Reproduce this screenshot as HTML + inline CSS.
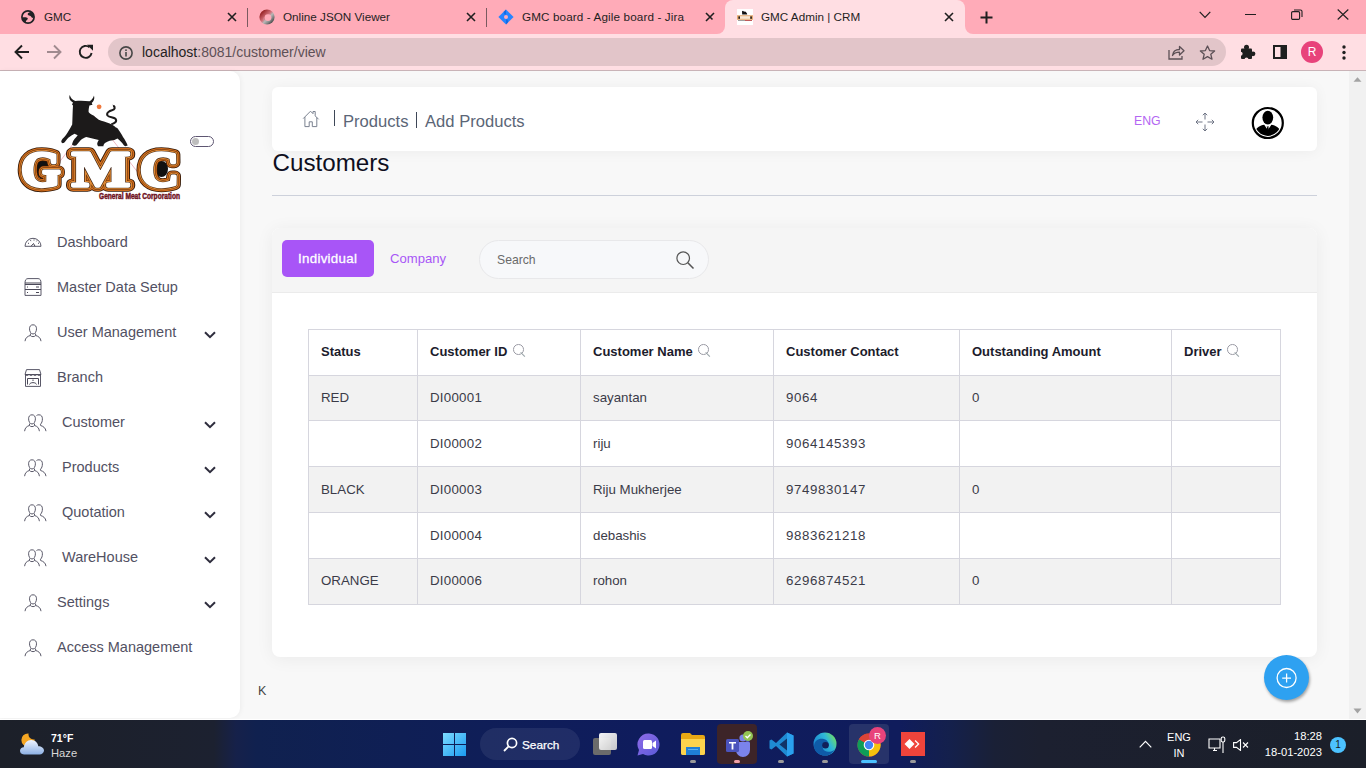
<!DOCTYPE html>
<html><head><meta charset="utf-8">
<style>
*{margin:0;padding:0;box-sizing:border-box}
html,body{width:1366px;height:768px;overflow:hidden;font-family:"Liberation Sans",sans-serif;background:#f8f8f8;position:relative}
.abs{position:absolute}
svg{display:block}
#tabbar{left:0;top:0;width:1366px;height:34px;background:#ffabb8}
#toolbar{left:0;top:34px;width:1366px;height:36px;background:#ffdee3}
#tline{left:0;top:70px;width:1366px;height:1px;background:#c9b3b7}
.tabt{top:10px;font-size:11.7px;color:#1f1f1f;white-space:nowrap}
.tsep{top:8px;width:1px;height:19px;background:#7a5a60}
#omni{left:108px;top:38px;width:1118px;height:28px;border-radius:14px;background:#e2c5c9}
#page{left:0;top:71px;width:1350px;height:649px;background:#f8f8f8}
#side{left:0;top:71px;width:240px;height:647px;background:#fff;border-radius:0 10px 10px 0;box-shadow:1px 0 5px rgba(0,0,0,.05)}
.mi{position:absolute;left:0;width:240px;height:20px;font-size:14.5px;color:#525163}
.mi span{position:absolute;top:1px;white-space:nowrap}
.mi svg.ic{position:absolute;left:24px}
.chev{position:absolute;left:204px;top:8.3px}
.bc{top:111.5px;font-size:16.6px;color:#5b6677;white-space:nowrap}
#scroll{left:1349px;top:71px;width:17px;height:649px;background:#f1f1f1}
#taskbar{left:0;top:720px;width:1366px;height:48px;background:linear-gradient(90deg,#1c2029 0px,#1c2130 214px,#16214a 236px,#10214f 256px,#0f1f55 400px,#0f1c5d 640px,#101c5c 900px,#14204c 950px,#1a2036 995px,#1c2030 1040px,#1b1f29 1366px)}
#tbl{border-collapse:collapse;table-layout:fixed;width:972px}
#tbl th,#tbl td{border:1px solid #d6d6de;height:45.8px;padding:0 0 .5px 12px;text-align:left;vertical-align:middle;white-space:nowrap}
#tbl th{font-size:13px;font-weight:bold;color:#1c1c2c;background:#fff;padding-bottom:1px}
#tbl td{font-size:13.3px;color:#3b3b48;background:#fff}
#tbl tr.od td{background:#f2f2f2}
#tbl td.n{letter-spacing:.6px}
#tbl td.d{letter-spacing:.25px}
.si{display:inline-block;width:14px;height:10px;vertical-align:0;position:relative}
.si:before{content:"";position:absolute;left:2px;top:-2.2px;width:8.8px;height:8.8px;border:1.1px solid #9a9aa4;border-radius:50%}
.si:after{content:"";position:absolute;left:9.6px;top:5.6px;width:6px;height:1.4px;background:#9aa4a8;transform:rotate(45deg);transform-origin:0 0}
</style></head>
<body>
<!-- ===== CHROME TAB BAR ===== -->
<div id="tabbar" class="abs"></div>
<!-- tab1 -->
<svg class="abs" style="left:21px;top:10px" width="14" height="14" viewBox="0 0 14 14"><circle cx="7" cy="7" r="6.1" stroke="#202124" stroke-width="1.7" fill="none"/><path d="M6.6 4.2C7 2.6 9.2 1.4 11.2 2.2L13 5.5L12.6 7.8C11.6 8.2 10.4 7.6 10 6.6C9.6 5.6 8.2 5.6 7.4 5.3Z" fill="#202124"/><path d="M1 7.6C3 7 5.6 7 6.6 7.9C7.2 8.8 6.3 9.8 5.3 10.4C4.6 11.2 4.8 12.2 5.4 13L2.4 11.6Z" fill="#202124"/></svg>
<div class="abs tabt" style="left:44px">GMC</div>
<svg class="abs tx" style="left:227px;top:12px" width="10" height="10" viewBox="0 0 10 10"><path d="M1 1L9 9M9 1L1 9" stroke="#1f1f1f" stroke-width="1.6"/></svg>
<div class="abs tsep" style="left:247px"></div>
<!-- tab2 -->
<svg class="abs" style="left:259px;top:9px" width="16" height="16" viewBox="0 0 16 16"><defs><linearGradient id="jg" x1="0.1" y1="0.1" x2="0.9" y2="0.9"><stop offset="0" stop-color="#8a1010"/><stop offset=".45" stop-color="#d2707a"/><stop offset=".6" stop-color="#b8b8b8"/><stop offset="1" stop-color="#3a3a3a"/></linearGradient><linearGradient id="jg2" x1="0" y1="0" x2="1" y2="1"><stop offset="0" stop-color="#f4f4f4"/><stop offset="1" stop-color="#7a7a7a"/></linearGradient></defs><circle cx="8" cy="8" r="7.6" fill="url(#jg)"/><path d="M4.2 9.5A4.6 4.6 0 0 0 12.6 10.5A4 4 0 0 1 4.6 8Z" fill="url(#jg2)" opacity=".9"/><circle cx="9" cy="8.6" r="3.4" fill="#ffabb8"/></svg>
<div class="abs tabt" style="left:283px">Online JSON Viewer</div>
<svg class="abs tx" style="left:466px;top:12px" width="10" height="10" viewBox="0 0 10 10"><path d="M1 1L9 9M9 1L1 9" stroke="#1f1f1f" stroke-width="1.6"/></svg>
<div class="abs tsep" style="left:486px"></div>
<!-- tab3 -->
<svg class="abs" style="left:498px;top:9px" width="16" height="16" viewBox="0 0 16 16"><path d="M8 0.4L15.6 8L8 15.6L0.4 8Z" fill="#2684ff"/><path d="M8 0.4L6.2 2.2Q5 4 7 6L8 5Z" fill="#0b5ed7" opacity=".7"/><path d="M8 15.6L9.8 13.8Q11 12 9 10L8 11Z" fill="#0b5ed7" opacity=".7"/><circle cx="8" cy="8" r="2" fill="#ffabb8"/></svg>
<div class="abs tabt" style="left:522px;letter-spacing:.12px">GMC board - Agile board - Jira</div>
<svg class="abs tx" style="left:705px;top:12px" width="10" height="10" viewBox="0 0 10 10"><path d="M1 1L9 9M9 1L1 9" stroke="#1f1f1f" stroke-width="1.6"/></svg>
<!-- active tab -->
<div class="abs" style="left:717px;top:26px;width:256px;height:8px;background:#ffdee3"></div>
<div class="abs" style="left:709px;top:18px;width:16px;height:16px;border-radius:8px;background:#ffabb8"></div>
<div class="abs" style="left:965px;top:18px;width:16px;height:16px;border-radius:8px;background:#ffabb8"></div>
<div class="abs" style="left:725px;top:0;width:240px;height:34px;background:#ffdee3;border-radius:8px 8px 0 0"></div>
<div class="abs" style="left:737px;top:9px;width:16px;height:16px;background:#fff"></div>
<svg class="abs" style="left:737px;top:9px" width="16" height="16" viewBox="0 0 16 16"><path d="M5 2.2L6 1.8L6.8 2.4L8.8 2.8L10 4.4L10.2 5.6L5.2 5.6Z" fill="#111"/><rect x="0" y="6.2" width="16" height="4.6" fill="#e6aa70"/><path d="M3 7.2H13V9.8H3Z" fill="#f8e6d4"/><rect x="1.4" y="7.4" width="1.6" height="2.4" fill="#222"/><rect x="13.3" y="7.4" width="1.6" height="2.4" fill="#222"/><rect x="1" y="11.2" width="7" height=".7" fill="#777"/><rect x="8" y="11.2" width="7" height=".8" fill="#b03030"/></svg>
<div class="abs tabt" style="left:761px">GMC Admin | CRM</div>
<svg class="abs tx" style="left:944px;top:12px" width="10" height="10" viewBox="0 0 10 10"><path d="M1 1L9 9M9 1L1 9" stroke="#1f1f1f" stroke-width="1.6"/></svg>
<!-- new tab -->
<svg class="abs" style="left:980px;top:11px" width="13" height="13" viewBox="0 0 13 13"><path d="M6.5 0.5V12.5M0.5 6.5H12.5" stroke="#1f1f1f" stroke-width="2"/></svg>
<!-- window controls -->
<svg class="abs" style="left:1199px;top:11px" width="12" height="8" viewBox="0 0 12 8"><path d="M0.7 0.9L6 6.5L11.3 0.9" stroke="#1f1f1f" stroke-width="1.2" fill="none"/></svg>
<div class="abs" style="left:1245px;top:14px;width:11px;height:1px;background:#1f1f1f"></div>
<svg class="abs" style="left:1291px;top:9px" width="12" height="11" viewBox="0 0 12 11"><rect x="0.6" y="2.6" width="8" height="7.8" rx="1.2" stroke="#1f1f1f" stroke-width="1.1" fill="none"/><path d="M3 1H9.5Q11 1 11 2.5V8" stroke="#1f1f1f" stroke-width="1.1" fill="none"/></svg>
<svg class="abs" style="left:1337px;top:9px" width="12" height="11" viewBox="0 0 12 11"><path d="M0.7 0.5L11.3 10.5M11.3 0.5L0.7 10.5" stroke="#1f1f1f" stroke-width="1.1"/></svg>

<!-- ===== TOOLBAR ===== -->
<div id="toolbar" class="abs"></div>
<div id="tline" class="abs"></div>
<svg class="abs" style="left:14px;top:44px" width="16" height="16" viewBox="0 0 16 16"><path d="M15 8H2M8 1.5L1.5 8L8 14.5" stroke="#1f1f1f" stroke-width="1.9" fill="none"/></svg>
<svg class="abs" style="left:46px;top:44px" width="16" height="16" viewBox="0 0 16 16"><path d="M1 8H14M8 1.5L14.5 8L8 14.5" stroke="#a08a8f" stroke-width="1.9" fill="none"/></svg>
<svg class="abs" style="left:78px;top:44px" width="16" height="16" viewBox="0 0 16 16"><path d="M13.6 9A6 6 0 1 1 11.5 3.2" stroke="#1f1f1f" stroke-width="1.9" fill="none"/><path d="M9 0.8H15V6.8Z" fill="#1f1f1f"/></svg>
<div id="omni" class="abs"></div>
<svg class="abs" style="left:119px;top:46px" width="14" height="14" viewBox="0 0 14 14"><circle cx="7" cy="7" r="6.1" stroke="#474747" stroke-width="1.6" fill="none"/><rect x="6.2" y="6" width="1.6" height="4.5" fill="#474747"/><rect x="6.2" y="3.4" width="1.6" height="1.6" fill="#474747"/></svg>
<div class="abs" style="left:142px;top:44px;font-size:14px;color:#1f1f1f;white-space:nowrap">localhost<span style="color:#5e5056">:8081/customer/view</span></div>
<svg class="abs" style="left:1168px;top:44px" width="17" height="16" viewBox="0 0 17 16"><path d="M1 6V15H14V12" stroke="#5c5056" stroke-width="1.3" fill="none"/><path d="M4.5 11.5C5 7 8 5.5 11.5 5.5V2.5L16 6.8L11.5 11V8.2C8.5 8.2 6 9 4.5 11.5Z" stroke="#5c5056" stroke-width="1.3" fill="none" stroke-linejoin="round"/></svg>
<svg class="abs" style="left:1199px;top:45px" width="17" height="15" viewBox="0 0 17 15"><path d="M8.5 1L10.6 5.6L15.6 6L11.8 9.3L13 14.2L8.5 11.6L4 14.2L5.2 9.3L1.4 6L6.4 5.6Z" stroke="#5c5056" stroke-width="1.3" fill="none" stroke-linejoin="round"/></svg>
<svg class="abs" style="left:1240px;top:44px" width="16" height="16" viewBox="0 0 16 16"><rect x="1" y="4.6" width="11" height="10.4" rx="1" fill="#1f1f1f"/><circle cx="6.5" cy="3.2" r="2.5" fill="#1f1f1f"/><circle cx="13" cy="9.8" r="2.4" fill="#1f1f1f"/><circle cx="6.5" cy="15.4" r="2" fill="#ffdee3"/><circle cx="0.6" cy="9.8" r="2" fill="#ffdee3"/></svg>
<svg class="abs" style="left:1273px;top:45px" width="14" height="14" viewBox="0 0 14 14"><rect x="1" y="1" width="12" height="12" stroke="#1f1f1f" stroke-width="2" fill="none"/><rect x="7.5" y="1" width="5.5" height="12" fill="#1f1f1f"/></svg>
<div class="abs" style="left:1301px;top:41px;width:22px;height:22px;border-radius:11px;background:#e8437b;color:#fff;font-size:12px;text-align:center;line-height:22px">R</div>
<svg class="abs" style="left:1342px;top:45px" width="4" height="15" viewBox="0 0 4 15"><circle cx="2" cy="2" r="1.7" fill="#1f1f1f"/><circle cx="2" cy="7.5" r="1.7" fill="#1f1f1f"/><circle cx="2" cy="13" r="1.7" fill="#1f1f1f"/></svg>
<!-- ===== PAGE ===== -->
<div id="page" class="abs"></div>
<div id="side" class="abs"></div>
<!-- logo -->
<svg class="abs" style="left:14px;top:92px" width="172" height="110" viewBox="0 0 172 110">
  <path d="M26 96 L80 24 L136 96" stroke="#e89aa8" stroke-width=".7" fill="none"/>
  <path d="M55.8 3.1 C54.5 6 56 9 59 10.5 L58 12.5 L59 13.6 C58.5 20 58.6 26 58.2 32.4 L56.6 35.5 C54.5 39 53 41.5 51.2 44.1 C49.5 46 47.2 48 47.25 49.6 C47.5 51 48.5 51.5 49.6 51.1 C51 50 52.5 47.8 54.3 45.7 C56.5 44 58.5 42.8 60.5 41.75 L63.7 43.3 C61.5 46 59.5 48 59 49.6 C58.2 51.5 58 52.5 58.2 52.7 C59.5 53.8 61 53.8 62.1 53.5 C64 51.5 65.5 49.5 66.8 48 C68.5 46.5 70.5 45.5 72.25 44.9 L78.5 46.4 L84.75 48 C84 49.5 83.2 50.5 83.2 51.9 C83.5 53.5 84 54.2 84.75 54.25 L89.4 54.25 C89.5 53 90 52 91 51.1 C92.5 50 94 49.2 95.7 48.8 L100.4 48 L103.5 46.4 C105 47.5 106.5 49 108.2 51.1 C109.2 52.5 110 53.8 111.3 54.25 L113.7 53.5 C112.5 50.5 111 47.5 109 44.9 C107.5 42.5 106.5 40.5 105 38.6 C104 36.5 103 35.5 101.9 35.5 C99.5 33.5 97.5 32.5 95.7 31.6 C92 30 88 29 84.75 27.7 C82.5 26 81 25 80 23.8 C77 22 75 21 74.6 19.9 C74.5 17.5 75 15.5 75.4 13.6 L78.5 12.8 L77.7 11 C79.5 9.5 81 7 80 3.5 C79.2 6 78 8 75.5 9.3 C71 8.5 65.5 8.5 61.3 8.9 C58.5 8 56.5 6 55.8 3.1 Z" fill="#1c1a1a"/>
  <path d="M97.25 32.4 C100.5 31.5 103.5 29.5 101.5 26.8 C99.5 25 95 25.5 93.5 23.5 C92 21 95.5 18.8 98 18.2 C101 17.5 101.5 15.5 99.6 13.6" stroke="#1c1a1a" stroke-width="2" fill="none"/>
  <path d="M98.5 12.5 L101.5 14.5 L100 16 Z" fill="#1c1a1a"/>
  <circle cx="85.1" cy="14.8" r="2.4" fill="#f0783c"/>
  <defs><g id="gmcl" font-family="Liberation Serif" font-weight="bold" font-size="50">
    <text x="7" y="93.6" textLength="39.5" lengthAdjust="spacingAndGlyphs">G</text>
    <text x="58" y="93.6" textLength="58" lengthAdjust="spacingAndGlyphs">M</text>
    <text x="126" y="93.6" textLength="39" lengthAdjust="spacingAndGlyphs">C</text>
  </g></defs>
  <ellipse cx="30" cy="77" rx="7.5" ry="10.5" fill="#111"/>
  <ellipse cx="147.5" cy="77" rx="6.5" ry="8" fill="#111"/>
  <path d="M73 94L78 79L80 94ZM94 94L99 79L102 94Z" fill="#111"/>
  <use href="#gmcl" fill="none" stroke="#2e1606" stroke-width="11.4" stroke-linejoin="round"/>
  <use href="#gmcl" fill="none" stroke="#d06c1c" stroke-width="9.8" stroke-linejoin="round"/>
  <use href="#gmcl" fill="none" stroke="#5a2a0a" stroke-width="7.4" stroke-linejoin="round"/>
  <use href="#gmcl" fill="none" stroke="#e08a34" stroke-width="6.6" stroke-linejoin="round"/>
  <use href="#gmcl" fill="none" stroke="#3a1c0a" stroke-width="4.6" stroke-linejoin="round"/>
  <use href="#gmcl" fill="#fff" stroke="#fff" stroke-width="3.4" stroke-linejoin="round"/>
  <text x="85" y="106.5" font-family="Liberation Sans" font-weight="bold" font-size="8.4" fill="#6e1020" stroke="#6e1020" stroke-width=".45" textLength="81" lengthAdjust="spacingAndGlyphs">General Meat Corporation</text>
</svg>
<!-- toggle -->
<div class="abs" style="left:190px;top:136px;width:24px;height:11px;border:1.3px solid #5e5672;border-radius:6px;background:#fff"></div>
<div class="abs" style="left:192px;top:138px;width:7px;height:7px;border-radius:4px;background:#bdbdbd"></div>

<!-- menu -->
<div class="mi" style="top:233px"><svg class="ic" style="top:4px" width="18" height="10" viewBox="0 0 18 10"><path d="M1 9.3A8 8 0 0 1 17 9.3Z" stroke="#5a5969" stroke-width="1" fill="none"/><path d="M7 9.3L9.5 6.5L11 9.3M4 6l1 .6M6.5 3.2l.4.9M10 2.5v1M13 3.5l-.5.8M15 6l-1 .5" stroke="#4a4857" stroke-width="1" fill="none"/></svg><span style="left:57px">Dashboard</span></div>
<div class="mi" style="top:278px"><svg class="ic" style="top:0px" width="18" height="18" viewBox="0 0 18 18"><path d="M1 5Q1 .6 4 .6H14Q17 .6 17 5V17.4H1Z" stroke="#5a5969" stroke-width="1" fill="none"/><path d="M1 5H17M1 6.5H17M1 11.5H17M3 9H4M3 14.5H4M12 9H15M12 14.5H15" stroke="#4a4857" stroke-width="1" fill="none"/></svg><span style="left:57px">Master Data Setup</span></div>
<div class="mi" style="top:323px"><svg class="ic" style="top:1px" width="18" height="18" viewBox="0 0 18 18"><path d="M9 .8C6.5 .8 5.5 2.6 5.5 4.8C5.5 7.6 7 10 9 10C11 10 12.5 7.6 12.5 4.8C12.5 2.6 11.5 .8 9 .8Z" stroke="#5a5969" stroke-width="1" fill="none"/><path d="M6.5 9.5L6.3 11.5C3.5 12.3 1.3 13.8 1 17.2M11.5 9.5L11.7 11.5C14.5 12.3 16.7 13.8 17 17.2M6.3 11.5C7.5 13 10.5 13 11.7 11.5" stroke="#5a5969" stroke-width="1" fill="none"/></svg><span style="left:57px">User Management</span><svg class="chev" width="12" height="8" viewBox="0 0 12 8"><path d="M1 1.2L6 6.2L11 1.2" stroke="#2e2d3d" stroke-width="2" fill="none"/></svg></div>
<div class="mi" style="top:368px"><svg class="ic" style="top:1px" width="18" height="18" viewBox="0 0 18 18"><path d="M1.5 5.5V17.4H16.5V5.5M1 5.5H17L15.5 .6H2.5Z" stroke="#5a5969" stroke-width="1" fill="none"/><path d="M1 5.5Q3 7.5 5 5.5Q7 7.5 9 5.5Q11 7.5 13 5.5Q15 7.5 17 5.5M3.5 15.5V9.5H14.5V15.5M5.5 15.5C6 13 12 13 12.5 15.5M9 10.5V12" stroke="#4a4857" stroke-width="1" fill="none"/></svg><span style="left:57px">Branch</span></div>
<div class="mi" style="top:413px"><svg class="ic" style="top:1px" width="24" height="18" viewBox="0 0 24 18"><path d="M8 .8C5.6 .8 4.6 2.6 4.6 4.8C4.6 7.6 6 10 8 10C10 10 11.4 7.6 11.4 4.8C11.4 2.6 10.4 .8 8 .8Z" stroke="#5a5969" stroke-width="1" fill="none"/><path d="M5.6 9.5L5.4 11.5C2.8 12.3 .9 13.8 .6 17.2M10.4 9.5L10.6 11.5C13.2 12.3 15.1 13.8 15.4 17.2M5.4 11.5C6.6 13 9.4 13 10.6 11.5" stroke="#5a5969" stroke-width="1" fill="none"/><path d="M12.5 1.5C13.3 .9 14 .8 15 .8C17.4 .8 18.4 2.6 18.4 4.8C18.4 7.2 17.8 9 16.5 10.2L16.6 11.5C19.2 12.3 21.6 13.8 22 17.2" stroke="#5a5969" stroke-width="1" fill="none"/></svg><span style="left:62px">Customer</span><svg class="chev" width="12" height="8" viewBox="0 0 12 8"><path d="M1 1.2L6 6.2L11 1.2" stroke="#2e2d3d" stroke-width="2" fill="none"/></svg></div>
<div class="mi" style="top:458px"><svg class="ic" style="top:1px" width="24" height="18" viewBox="0 0 24 18"><path d="M8 .8C5.6 .8 4.6 2.6 4.6 4.8C4.6 7.6 6 10 8 10C10 10 11.4 7.6 11.4 4.8C11.4 2.6 10.4 .8 8 .8Z" stroke="#5a5969" stroke-width="1" fill="none"/><path d="M5.6 9.5L5.4 11.5C2.8 12.3 .9 13.8 .6 17.2M10.4 9.5L10.6 11.5C13.2 12.3 15.1 13.8 15.4 17.2M5.4 11.5C6.6 13 9.4 13 10.6 11.5" stroke="#5a5969" stroke-width="1" fill="none"/><path d="M12.5 1.5C13.3 .9 14 .8 15 .8C17.4 .8 18.4 2.6 18.4 4.8C18.4 7.2 17.8 9 16.5 10.2L16.6 11.5C19.2 12.3 21.6 13.8 22 17.2" stroke="#5a5969" stroke-width="1" fill="none"/></svg><span style="left:62px">Products</span><svg class="chev" width="12" height="8" viewBox="0 0 12 8"><path d="M1 1.2L6 6.2L11 1.2" stroke="#2e2d3d" stroke-width="2" fill="none"/></svg></div>
<div class="mi" style="top:503px"><svg class="ic" style="top:1px" width="24" height="18" viewBox="0 0 24 18"><path d="M8 .8C5.6 .8 4.6 2.6 4.6 4.8C4.6 7.6 6 10 8 10C10 10 11.4 7.6 11.4 4.8C11.4 2.6 10.4 .8 8 .8Z" stroke="#5a5969" stroke-width="1" fill="none"/><path d="M5.6 9.5L5.4 11.5C2.8 12.3 .9 13.8 .6 17.2M10.4 9.5L10.6 11.5C13.2 12.3 15.1 13.8 15.4 17.2M5.4 11.5C6.6 13 9.4 13 10.6 11.5" stroke="#5a5969" stroke-width="1" fill="none"/><path d="M12.5 1.5C13.3 .9 14 .8 15 .8C17.4 .8 18.4 2.6 18.4 4.8C18.4 7.2 17.8 9 16.5 10.2L16.6 11.5C19.2 12.3 21.6 13.8 22 17.2" stroke="#5a5969" stroke-width="1" fill="none"/></svg><span style="left:62px">Quotation</span><svg class="chev" width="12" height="8" viewBox="0 0 12 8"><path d="M1 1.2L6 6.2L11 1.2" stroke="#2e2d3d" stroke-width="2" fill="none"/></svg></div>
<div class="mi" style="top:548px"><svg class="ic" style="top:1px" width="24" height="18" viewBox="0 0 24 18"><path d="M8 .8C5.6 .8 4.6 2.6 4.6 4.8C4.6 7.6 6 10 8 10C10 10 11.4 7.6 11.4 4.8C11.4 2.6 10.4 .8 8 .8Z" stroke="#5a5969" stroke-width="1" fill="none"/><path d="M5.6 9.5L5.4 11.5C2.8 12.3 .9 13.8 .6 17.2M10.4 9.5L10.6 11.5C13.2 12.3 15.1 13.8 15.4 17.2M5.4 11.5C6.6 13 9.4 13 10.6 11.5" stroke="#5a5969" stroke-width="1" fill="none"/><path d="M12.5 1.5C13.3 .9 14 .8 15 .8C17.4 .8 18.4 2.6 18.4 4.8C18.4 7.2 17.8 9 16.5 10.2L16.6 11.5C19.2 12.3 21.6 13.8 22 17.2" stroke="#5a5969" stroke-width="1" fill="none"/></svg><span style="left:62px">WareHouse</span><svg class="chev" width="12" height="8" viewBox="0 0 12 8"><path d="M1 1.2L6 6.2L11 1.2" stroke="#2e2d3d" stroke-width="2" fill="none"/></svg></div>
<div class="mi" style="top:593px"><svg class="ic" style="top:1px" width="18" height="18" viewBox="0 0 18 18"><path d="M9 .8C6.5 .8 5.5 2.6 5.5 4.8C5.5 7.6 7 10 9 10C11 10 12.5 7.6 12.5 4.8C12.5 2.6 11.5 .8 9 .8Z" stroke="#5a5969" stroke-width="1" fill="none"/><path d="M6.5 9.5L6.3 11.5C3.5 12.3 1.3 13.8 1 17.2M11.5 9.5L11.7 11.5C14.5 12.3 16.7 13.8 17 17.2M6.3 11.5C7.5 13 10.5 13 11.7 11.5" stroke="#5a5969" stroke-width="1" fill="none"/></svg><span style="left:57px">Settings</span><svg class="chev" width="12" height="8" viewBox="0 0 12 8"><path d="M1 1.2L6 6.2L11 1.2" stroke="#2e2d3d" stroke-width="2" fill="none"/></svg></div>
<div class="mi" style="top:638px"><svg class="ic" style="top:1px" width="18" height="18" viewBox="0 0 18 18"><path d="M9 .8C6.5 .8 5.5 2.6 5.5 4.8C5.5 7.6 7 10 9 10C11 10 12.5 7.6 12.5 4.8C12.5 2.6 11.5 .8 9 .8Z" stroke="#5a5969" stroke-width="1" fill="none"/><path d="M6.5 9.5L6.3 11.5C3.5 12.3 1.3 13.8 1 17.2M11.5 9.5L11.7 11.5C14.5 12.3 16.7 13.8 17 17.2M6.3 11.5C7.5 13 10.5 13 11.7 11.5" stroke="#5a5969" stroke-width="1" fill="none"/></svg><span style="left:57px">Access Management</span></div>
<!-- header card -->
<div class="abs" style="left:272px;top:87px;width:1045px;height:64px;background:#fff;border-radius:6px;box-shadow:0 1px 14px rgba(0,0,0,.05)"></div>
<svg class="abs" style="left:302px;top:110px" width="19" height="18" viewBox="0 0 19 18"><path d="M1.2 8.6L8.5 1.2L11 3.7V1.5H13.2V5.9L16.6 9.3M2.9 7V16.6H7.2V11.8H10.3V16.6H14.8V7.5" stroke="#7b8290" stroke-width="1" fill="none" stroke-linejoin="round"/></svg>
<div class="abs" style="left:334px;top:110px;width:1.2px;height:16px;background:#3e4757"></div>
<div class="abs bc" style="left:343px">Products</div>
<div class="abs" style="left:416px;top:112px;width:1.2px;height:16px;background:#3e4757"></div>
<div class="abs bc" style="left:425px">Add Products</div>
<div class="abs" style="left:1134px;top:114px;font-size:12.3px;color:#b366f2">ENG</div>
<svg class="abs" style="left:1195px;top:112px" width="20" height="20" viewBox="0 0 20 20"><path d="M10 1V7.5M10 12.5V19M1 10H7.5M12.5 10H19M7.8 3.2L10 1L12.2 3.2M7.8 16.8L10 19L12.2 16.8M3.2 7.8L1 10L3.2 12.2M16.8 7.8L19 10L16.8 12.2" stroke="#6f7585" stroke-width="1" fill="none"/></svg>
<svg class="abs" style="left:1251px;top:106px" width="34" height="34" viewBox="0 0 34 34"><defs><clipPath id="avc"><circle cx="16.8" cy="17" r="12.9"/></clipPath></defs><circle cx="16.8" cy="17" r="15" stroke="#000" stroke-width="2.2" fill="#fff"/><ellipse cx="16.8" cy="11.6" rx="5.4" ry="6.9" fill="#000"/><g clip-path="url(#avc)"><path d="M4 34V26C5 21.5 9 19.5 13.2 18.8L16.8 24L20.4 18.8C24.6 19.5 28.6 21.5 29.6 26V34Z" fill="#000"/></g><path d="M15.6 20.4H18L17.4 21.4L17.9 23.6L16.8 24.2L15.7 23.6L16.2 21.4Z" fill="#000"/></svg>

<div class="abs" style="left:272.5px;top:149.3px;font-size:24.2px;color:#0f0f1e">Customers</div>
<div class="abs" style="left:272px;top:195px;width:1045px;height:1px;background:#cdd1db"></div>

<!-- main card -->
<div class="abs" style="left:272px;top:228px;width:1045px;height:429px;background:#fff;border-radius:8px;box-shadow:0 2px 18px rgba(0,0,0,.06);overflow:hidden">
  <div style="position:absolute;left:0;top:0;width:100%;height:65px;background:#f5f5f5;border-bottom:1px solid #ebebeb"></div>
</div>
<div class="abs" style="left:282px;top:240px;width:92px;height:37px;background:#a855f7;border-radius:5px"></div>
<div class="abs" style="left:298px;top:251px;font-size:13.3px;color:#fff;-webkit-text-stroke:.3px #fff;letter-spacing:.3px">Individual</div>
<div class="abs" style="left:390px;top:251px;font-size:13.1px;color:#a855f7">Company</div>
<div class="abs" style="left:479px;top:240px;width:230px;height:39px;background:#f7f8fa;border:1px solid #e8e8ea;border-radius:20px"></div>
<div class="abs" style="left:497px;top:253px;font-size:12.2px;color:#6a6a6a">Search</div>
<svg class="abs" style="left:676px;top:251px" width="19" height="19" viewBox="0 0 19 19"><circle cx="7.2" cy="7.2" r="6.3" stroke="#555" stroke-width="1.2" fill="none"/><path d="M11.8 11.8L17.5 17.5" stroke="#555" stroke-width="1.6" /></svg>

<!-- table -->
<table id="tbl" class="abs" style="left:308px;top:328.8px">
<colgroup><col style="width:109px"><col style="width:163px"><col style="width:193px"><col style="width:186px"><col style="width:212px"><col style="width:109px"></colgroup>
<tr class="hd"><th>Status</th><th>Customer ID <i class="si"></i></th><th>Customer Name <i class="si"></i></th><th>Customer Contact</th><th>Outstanding Amount</th><th>Driver <i class="si"></i></th></tr>
<tr class="od"><td>RED</td><td class="d">DI00001</td><td>sayantan</td><td class="n">9064</td><td>0</td><td></td></tr>
<tr><td></td><td class="d">DI00002</td><td>riju</td><td class="n">9064145393</td><td></td><td></td></tr>
<tr class="od"><td>BLACK</td><td class="d">DI00003</td><td>Riju Mukherjee</td><td class="n">9749830147</td><td>0</td><td></td></tr>
<tr><td></td><td class="d">DI00004</td><td>debashis</td><td class="n">9883621218</td><td></td><td></td></tr>
<tr class="od"><td>ORANGE</td><td class="d">DI00006</td><td>rohon</td><td class="n">6296874521</td><td>0</td><td></td></tr>
</table>

<div class="abs" style="left:258px;top:684px;font-size:12.5px;color:#444">K</div>

<!-- FAB -->
<div class="abs" style="left:1264px;top:655px;width:45px;height:45px;border-radius:50%;background:#2ea1f1;box-shadow:1px 2px 3px rgba(0,0,0,.35)"></div>
<svg class="abs" style="left:1276px;top:667px" width="22" height="22" viewBox="0 0 22 22"><circle cx="10.6" cy="11" r="9.5" stroke="#fff" stroke-width="1.3" fill="none"/><path d="M10.6 6.6V15.4M6.2 11H15" stroke="#fff" stroke-width="1.25"/></svg>

<!-- scrollbar -->
<div id="scroll" class="abs"></div>
<svg class="abs" style="left:1353px;top:77px" width="9" height="5" viewBox="0 0 9 5"><path d="M0.5 4.8L4.5 0.3L8.5 4.8Z" fill="#a3a3a3"/></svg>
<svg class="abs" style="left:1353px;top:708px" width="9" height="6" viewBox="0 0 9 6"><path d="M0.5 0.5L4.5 5.5L8.5 0.5Z" fill="#a3a3a3"/></svg>
<div class="abs" style="left:0;top:719px;width:1366px;height:1px;background:#fff"></div>
<!-- ===== TASKBAR ===== -->
<div id="taskbar" class="abs"></div>
<!-- weather -->
<svg class="abs" style="left:18px;top:732px" width="28" height="24" viewBox="0 0 28 24"><defs><linearGradient id="cl" x1="0" y1="0" x2="0" y2="1"><stop offset="0" stop-color="#f0f5ff"/><stop offset="1" stop-color="#8cb0e4"/></linearGradient></defs><mask id="mm"><rect width="28" height="24" fill="#fff"/><circle cx="15.5" cy="2.5" r="5" fill="#000"/></mask><circle cx="10" cy="8" r="6.6" fill="#f5a623" mask="url(#mm)"/><path d="M6 22.5C3 22.5 2 20.5 2 18.8C2 16.8 3.6 15.2 5.8 15.2C6.3 11.2 9.3 8 13.2 8C17 8 19.8 10.8 20.3 14.3C23.5 14.3 26 16.2 26 18.6C26 21 24 22.5 21.5 22.5Z" fill="url(#cl)"/></svg>
<div class="abs" style="left:51px;top:732px;font-size:10.5px;font-weight:bold;color:#fff">71°F</div>
<div class="abs" style="left:51px;top:747px;font-size:11.2px;color:#d8d8d8">Haze</div>
<!-- start -->
<svg class="abs" style="left:443px;top:733px" width="23" height="23" viewBox="0 0 23 23"><defs><linearGradient id="wg" x1="0" y1="0" x2="1" y2="1"><stop offset="0" stop-color="#7ddcff"/><stop offset="1" stop-color="#1a9af0"/></linearGradient></defs><path d="M0 0H11V11H0ZM12 0H23V11H12ZM0 12H11V23H0ZM12 12H23V23H12Z" fill="url(#wg)"/></svg>
<div class="abs" style="left:480px;top:728px;width:100px;height:32px;border-radius:16px;background:rgba(255,255,255,.075)"></div>
<svg class="abs" style="left:503px;top:737px" width="15" height="15" viewBox="0 0 15 15"><circle cx="9" cy="6" r="4.6" stroke="#fff" stroke-width="1.7" fill="none"/><path d="M5.6 9.4L1 14" stroke="#fff" stroke-width="1.8"/></svg>
<div class="abs" style="left:522px;top:738px;font-size:11.8px;color:#fff;-webkit-text-stroke:.25px #fff">Search</div>
<!-- task view -->
<div class="abs" style="left:593px;top:738px;width:18px;height:17px;background:#6b6b6b;border-radius:2px"></div>
<div class="abs" style="left:599px;top:733px;width:18px;height:17px;background:linear-gradient(135deg,#fff,#cfcfcf);border-radius:2px;opacity:.95"></div>
<!-- chat -->
<svg class="abs" style="left:637px;top:733px" width="24" height="23" viewBox="0 0 24 23"><defs><linearGradient id="ch" x1="0" y1="0" x2="1" y2="1"><stop offset="0" stop-color="#8f6be8"/><stop offset="1" stop-color="#5a5ad8"/></linearGradient></defs><path d="M12 0.5A11 11 0 1 1 6 21L0.5 22.5L2 17A11 11 0 0 1 12 0.5Z" fill="url(#ch)"/><rect x="6" y="7" width="9" height="9" rx="1.5" fill="#fff"/><path d="M15.5 10L19 7.5V15.5L15.5 13Z" fill="#fff"/></svg>
<!-- explorer -->
<svg class="abs" style="left:681px;top:733px" width="24" height="22" viewBox="0 0 24 22"><path d="M0 2Q0 0 2 0H9L11 2H22Q24 2 24 4V20Q24 22 22 22H2Q0 22 0 20Z" fill="#e8a814"/><path d="M0 6H24V20Q24 22 22 22H2Q0 22 0 20Z" fill="#fcd34d"/><path d="M5 14H19V22H5Z" fill="#1f7fd6"/><path d="M7 16H17V17H7Z" fill="#5ab0f0"/></svg>
<div class="abs" style="left:690px;top:760px;width:6px;height:3px;border-radius:2px;background:#9a9a9a"></div>
<!-- teams -->
<div class="abs" style="left:717px;top:724px;width:40px;height:40px;border-radius:4px;background:#3d2428"></div>
<svg class="abs" style="left:724px;top:731px" width="30" height="26" viewBox="0 0 30 26"><circle cx="19" cy="7" r="3.6" fill="#7b83eb"/><path d="M11 11H25Q26 11 26 12V19A7 7 0 0 1 12 19Z" fill="#7b83eb"/><circle cx="23.5" cy="8.5" r="2.5" fill="#5059c9"/><rect x="2" y="8" width="13" height="13" rx="1.5" fill="#4b53bc"/><path d="M5 11H12V12.6H9.4V18.5H7.6V12.6H5Z" fill="#fff"/><circle cx="24" cy="5" r="5" fill="#92c353"/><path d="M21.5 5L23.3 6.8L26.5 3.5" stroke="#fff" stroke-width="1.3" fill="none"/></svg>
<div class="abs" style="left:734px;top:760px;width:6px;height:3px;border-radius:2px;background:#f0a0a8"></div>
<!-- vscode -->
<svg class="abs" style="left:769px;top:732px" width="25" height="25" viewBox="0 0 25 25"><path d="M18 0.5L24.5 3.5V21.5L18 24.5L7 14L2.5 17.5L0.5 16.5V8.5L2.5 7.5L7 11Z" fill="#1f8ad2"/><path d="M18 0.5L24.5 3.5V21.5L18 24.5Z" fill="#2aa0ee"/><path d="M18 6.5L10.5 12.5L18 18.5Z" fill="#0f2a5a" opacity=".9"/></svg>
<div class="abs" style="left:778px;top:760px;width:6px;height:3px;border-radius:2px;background:#9a9a9a"></div>
<!-- edge -->
<svg class="abs" style="left:813px;top:732px" width="24" height="24" viewBox="0 0 24 24"><defs><linearGradient id="eg" x1="1" y1="0.2" x2="0" y2="0.8"><stop offset="0" stop-color="#74e05a"/><stop offset=".35" stop-color="#2fb8d8"/><stop offset="1" stop-color="#1478d0"/></linearGradient></defs><circle cx="12" cy="12" r="11.5" fill="url(#eg)"/><path d="M1 14C1.5 9 5 6.5 9.5 6.8C13.5 7.2 16 10 16 13.5L10 13.8C9 16.5 11 19.5 15 19.8C17.5 20 20 19 21.5 17.5C19.5 21.5 16 23.5 12 23.5C6 23.5 1 19.5 1 14Z" fill="#0f5ba8"/><circle cx="12.5" cy="13.2" r="3.3" fill="#12205a"/></svg>
<div class="abs" style="left:822px;top:760px;width:6px;height:3px;border-radius:2px;background:#9a9a9a"></div>
<!-- chrome -->
<div class="abs" style="left:849px;top:724px;width:40px;height:40px;border-radius:4px;background:#27336a"></div>
<svg class="abs" style="left:857px;top:733px" width="24" height="24" viewBox="0 0 24 24"><circle cx="12" cy="12" r="11.5" fill="#db4437"/><path d="M12 12L22 6.2A11.5 11.5 0 0 1 12 23.5Z" fill="#f4c20d"/><path d="M12 12L12 23.5A11.5 11.5 0 0 1 2 6.2Z" fill="#0f9d58"/><path d="M12 12L2 6.2A11.5 11.5 0 0 1 22 6.2Z" fill="#db4437"/><circle cx="12" cy="12" r="5.3" fill="#fff"/><circle cx="12" cy="12" r="4.2" fill="#4285f4"/></svg>
<div class="abs" style="left:869px;top:727px;width:17px;height:17px;border-radius:50%;background:#e8437b;color:#fff;font-size:9.5px;text-align:center;line-height:17px">R</div>
<div class="abs" style="left:861px;top:760px;width:16px;height:3px;border-radius:2px;background:#4cc2ff"></div>
<!-- anydesk -->
<svg class="abs" style="left:901px;top:732px" width="24" height="24" viewBox="0 0 24 24"><rect width="24" height="24" fill="#ef443b"/><path d="M8.5 7L13.5 12L8.5 17L3.5 12Z" fill="#fff"/><path d="M14.5 8L18.5 12L14.5 16L13.6 15.1L16.7 12L13.6 8.9Z" fill="#fff"/></svg>
<div class="abs" style="left:910px;top:760px;width:6px;height:3px;border-radius:2px;background:#9a9a9a"></div>
<!-- tray -->
<svg class="abs" style="left:1139px;top:740px" width="13" height="8" viewBox="0 0 13 8"><path d="M0.7 7.3L6.5 1.3L12.3 7.3" stroke="#fff" stroke-width="1.2" fill="none"/></svg>
<div class="abs" style="left:1167px;top:729px;font-size:11px;color:#fff;text-align:center;width:24px;line-height:16px">ENG<br>IN</div>
<svg class="abs" style="left:1208px;top:736px" width="18" height="18" viewBox="0 0 18 18"><path d="M1 3H12V12H1Z" stroke="#fff" stroke-width="1.1" fill="none"/><path d="M5 14.5H9M6.5 12V14.5" stroke="#fff" stroke-width="1.1"/><rect x="13.2" y="1" width="3.6" height="5" rx="1.6" stroke="#fff" stroke-width="1.1" fill="none"/><path d="M15 6V17" stroke="#fff" stroke-width="1.1"/></svg>
<svg class="abs" style="left:1233px;top:739px" width="16" height="12" viewBox="0 0 16 12"><path d="M0.6 3.6H3.5L7.5 0.6V11.4L3.5 8.4H0.6Z" stroke="#fff" stroke-width="1.1" fill="none"/><path d="M10 3.5L15 8.5M15 3.5L10 8.5" stroke="#fff" stroke-width="1.1"/></svg>
<div class="abs" style="left:1254px;top:729px;width:68px;font-size:11.2px;color:#fff;text-align:right;line-height:15.5px">18:28<br>18-01-2023</div>
<div class="abs" style="left:1330px;top:736.5px;width:16px;height:16px;border-radius:50%;background:#4cc2ff;color:#1a1a1a;font-size:10px;text-align:center;line-height:16px">1</div>
</body></html>
